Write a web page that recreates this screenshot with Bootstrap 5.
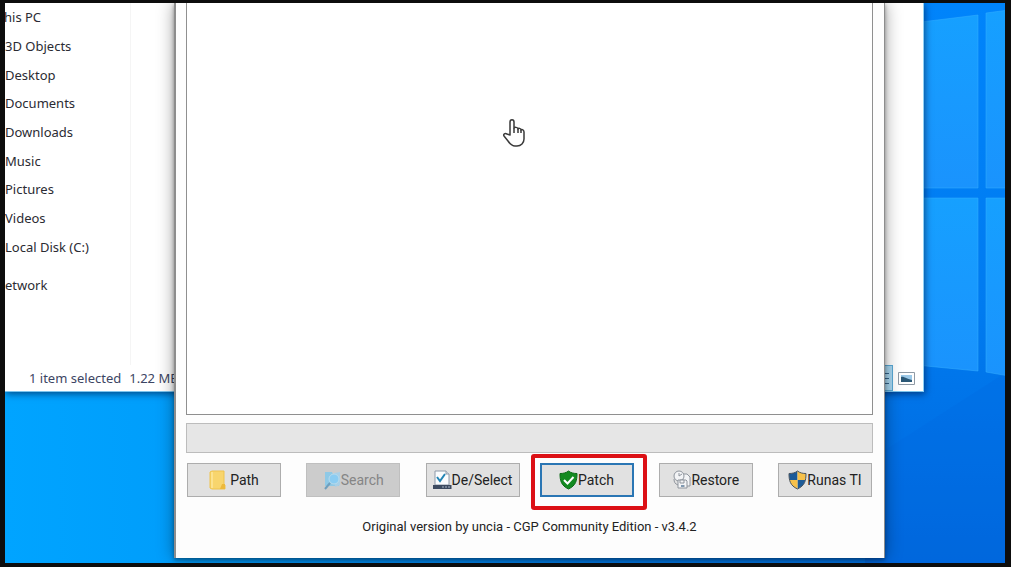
<!DOCTYPE html>
<html lang="en">
<head>
<meta charset="utf-8">
<meta name="viewport" content="width=device-width, initial-scale=1">
<title>Patcher</title>
<link href="https://cdn.jsdelivr.net/npm/bootstrap@5.3.0/dist/css/bootstrap.min.css" rel="stylesheet">
<style>
  body { background: #0d0d0d; padding: 3px 6px 4px 5px; font-family: Roboto, "Liberation Sans", Arial, sans-serif; font-size: 14px; line-height: 20px; }
  .desktop { background: linear-gradient(90deg, #00a4ff 0%, #009dfb 18%, #0079e6 60%, #0070e6 100%); }
  .wallpaper { inset: 0; }
  .explorer { inset: 0 81px 171px 0; background: #fff; color: #2b2b33; font-family: "Noto Sans", "Open Sans", sans-serif; font-size: 13px; border-right: 1px solid #8fd0f5; border-bottom: 1px solid #7cc4ee; box-shadow: 1px 2px 7px rgba(0, 20, 60, .6); }
  .tree { width: 126px; border-right: 1px solid #f5f5f5; }
  .places { height: 258px; }
  .tree a { color: inherit; }
  .places li.cut { margin-left: -1px; }
  .network { margin-top: 14px; }
  .statusbar { height: 26px; color: #3c4563; padding-left: 24px; }
  .view-btn { width: 26px; height: 26px; }
  .view-btn.chosen { background: #a9d8f2; border: 1px solid #5aa9d6 !important; }
  .patcher { inset: 0 120px 5px 169px; background: #fdfdfd; border: solid #8d8d8d; border-width: 0 1px 0 2px; box-shadow: 0 0 16px rgba(0, 0, 0, .38), 0 2px 4px rgba(0, 0, 0, .35); padding: 0 11px 21px 10px; }
  .results { background: #fff; border: 1px solid #8f8f8f; border-top: 0; }
  .meter { height: 30px; margin-top: 8px; background: #e6e6e6; border: 1px solid #bcbcbc; border-radius: 0; }
  .actions { margin-top: 10px; gap: 20px; padding: 0 1px; }
  .tool { width: 94px; height: 34px; padding: 0; background: #e1e1e1; border: 1px solid #adadad; border-radius: 0; color: #222; font-size: 14px; line-height: 20px; }
  .tool:hover { background: #e5f1fb; border-color: #0078d7; }
  .tool:disabled { background: #cccccc; border-color: #bfbfbf; color: #858585; opacity: 1; }
  .tool.focused { border: 2px solid #2a76b4; }
  .callout { inset: -9px -13px -13px -9px; border: 4px solid #dc1015; border-radius: 3px; pointer-events: none; }
  .credit { margin-top: 20px; font-size: 13px; color: #222; }
  .pointer { left: 497px; top: 115px; }
</style>
</head>
<body class="vh-100 overflow-hidden">
<main class="desktop position-relative h-100 overflow-hidden">
  <svg class="wallpaper position-absolute w-100 h-100" viewBox="0 0 1000 560" preserveAspectRatio="xMaxYMin slice" aria-hidden="true">
    <defs>
      <linearGradient id="sky" x1="0" y1="0" x2="0" y2="1"><stop offset="0" stop-color="#0084fb"/><stop offset=".55" stop-color="#007bf0"/><stop offset="1" stop-color="#0067dc"/></linearGradient>
      <linearGradient id="pane" x1="0" y1="0" x2="0" y2="1"><stop offset="0" stop-color="#16a0ff"/><stop offset="1" stop-color="#1a93fd"/></linearGradient>
    </defs>
    <rect x="860" width="140" height="560" fill="url(#sky)"/>
    <path d="M860 460 1000 370V560H860z" fill="#0066e0" opacity=".25"/>
    <g fill="url(#pane)" stroke="#35b0ff" stroke-opacity=".5">
      <path d="M900 21 973 12V185H900z"/><path d="M981 10 1004 7V185H981z"/>
      <path d="M900 195H973V368L900 361z"/><path d="M981 195H1004V373L981 369z"/>
    </g>
  </svg>

  <section class="explorer position-absolute d-flex flex-column" aria-label="File Explorer">
    <nav class="tree flex-grow-1 overflow-hidden">
      <ul class="places list-unstyled d-flex flex-column justify-content-around mb-0 text-nowrap">
        <li class="cut"><a class="text-decoration-none" href="#">his PC</a></li>
        <li><a class="text-decoration-none" href="#">3D Objects</a></li>
        <li><a class="text-decoration-none" href="#">Desktop</a></li>
        <li><a class="text-decoration-none" href="#">Documents</a></li>
        <li><a class="text-decoration-none" href="#">Downloads</a></li>
        <li><a class="text-decoration-none" href="#">Music</a></li>
        <li><a class="text-decoration-none" href="#">Pictures</a></li>
        <li><a class="text-decoration-none" href="#">Videos</a></li>
        <li><a class="text-decoration-none" href="#">Local Disk (C:)</a></li>
      </ul>
      <a class="network d-block text-decoration-none" href="#">etwork</a>
    </nav>
    <footer class="statusbar d-flex align-items-center text-nowrap">
      <span>1 item selected</span><span class="ms-2">1.22 MB</span>
      <button class="view-btn chosen btn p-0 rounded-0 ms-auto d-flex align-items-center justify-content-end" aria-label="Details view">
        <svg width="16" height="16" viewBox="0 0 16 16" stroke="#35648c" aria-hidden="true"><path d="M2 3.500H13M2 8.500H13M2 13.500H13"/></svg>
      </button>
      <button class="view-btn btn border-0 p-0 rounded-0 me-1 d-flex align-items-center justify-content-center" aria-label="Large icons view">
        <svg width="17" height="13" viewBox="0 0 17 13" aria-hidden="true"><path d="M.5.5h16v12H.5z" fill="#fff" stroke="#8f9aa5"/><path d="M3 3h11v7H3z" fill="#9cc9e8"/><path d="M3 5c3-1 5 2 11 3v2H3z" fill="#2b5876"/></svg>
      </button>
    </footer>
  </section>

  <section class="patcher position-absolute d-flex flex-column" aria-label="Patcher">
    <div class="results flex-grow-1"></div>
    <div class="meter progress" role="progressbar" aria-label="Progress" aria-valuenow="0" aria-valuemin="0" aria-valuemax="100"></div>
    <div class="actions d-flex">
      <div class="d-flex flex-fill justify-content-between">
        <button class="tool btn d-flex align-items-center justify-content-center">
          <svg width="17" height="20" viewBox="0 0 17 20" class="me-1" aria-hidden="true"><path d="M1 2 3 1H15V14l1 1v4H3L1 18z" fill="#f8d56d" stroke="#efc34e"/><path d="M3 2v16" stroke="#fff0b3"/><path d="M13 14h3v5h-5z" fill="#edb93b"/></svg>Path
        </button>
        <button class="tool btn d-flex align-items-center justify-content-center" disabled>
          <svg width="18" height="20" viewBox="0 0 18 20" aria-hidden="true"><path d="M2 2h7l1 2h6v12H2z" fill="#8fc9e6"/><path d="M11 3 17 2v13l-5 2z" fill="#a9cfe6"/><circle cx="11" cy="9" r="5" fill="#8accf2" stroke="#b9dbec"/><path d="m7 13-5 6" stroke="#6f9fbd" stroke-width="2"/></svg>Search
        </button>
        <button class="tool btn d-flex align-items-center justify-content-center">
          <svg width="19" height="20" viewBox="0 0 19 20" aria-hidden="true"><path d="M2 1h11l3 3v11H2z" fill="#fafcfe" stroke="#8e99a8"/><path d="M13 1v3h3" fill="#d7dee7" stroke="#8e99a8"/><path d="m4 7 3 4 5-7" fill="none" stroke="#2284b5" stroke-width="2"/><path d="M0 15h18.500v4H0z" fill="#3c4a60"/><path d="M9 17h2m1 0h2m1 0h2" stroke="#a6b3c5"/></svg>De/Select
        </button>
      </div>
      <div class="d-flex flex-fill justify-content-between">
        <div class="position-relative">
          <button class="tool focused btn d-flex align-items-center justify-content-center">
            <svg width="19" height="20" viewBox="0 0 19 20" aria-hidden="true"><path d="M9.500 1C12 3 15 3.500 18 3.500c0 7-1 12-8.500 15.500C2 15.500 1 10.500 1 3.500 4 3.500 7 3 9.500 1z" fill="#138a20" stroke="#0c6b17"/><path d="m5 10 3.500 3.500L14.500 7" fill="none" stroke="#fff" stroke-width="2"/></svg>Patch
          </button>
          <div class="callout position-absolute"></div>
        </div>
        <button class="tool btn d-flex align-items-center justify-content-center">
          <svg width="19" height="20" viewBox="0 0 19 20" fill="#f3f4f6" stroke="#8f959d" aria-hidden="true"><path d="M10 4h5l3 3v9h-8z"/><circle cx="7" cy="6" r="5"/><path d="M7 3v3l3-2" fill="none"/><path d="M2 9c0 3 1 5 4 6" fill="none"/><path d="M6 10h8l1 1v7H6z"/><path d="M8 10h4v3H8zM9 16h4"/><path d="M9 16h3" stroke="#3e6f99"/></svg>Restore
        </button>
        <button class="tool btn d-flex align-items-center justify-content-center">
          <svg width="19" height="20" viewBox="0 0 19 20" aria-hidden="true"><clipPath id="uac"><path d="M9.500 1C12 3 15 3.500 18 3.500c0 7-1 12-8.500 15.500C2 15.500 1 10.500 1 3.500 4 3.500 7 3 9.500 1z"/></clipPath><g clip-path="url(#uac)"><path d="M0 0h9.500v10H0zM9.500 10H19v10H9.500z" fill="#1d5b98"/><path d="M9.500 0H19v10H9.500zM0 10h9.500v10H0z" fill="#f6c14b"/></g><path d="M9.500 1C12 3 15 3.500 18 3.500c0 7-1 12-8.500 15.500C2 15.500 1 10.500 1 3.500 4 3.500 7 3 9.500 1z" fill="none" stroke="#4b5661"/></svg>Runas TI
        </button>
      </div>
    </div>
    <p class="credit text-center mb-0">Original version by uncia - CGP Community Edition - v3.4.2</p>
  </section>

  <svg class="pointer position-absolute" width="24" height="30" viewBox="0 0 24 30" aria-hidden="true">
    <path d="M8 17V4c0-3 4-3 4 0v6c0-1 4-1 4 1 0-1 3-1 3 1 1-1 3 0 3 2v7c0 4-3 7-7 7h-2c-3 0-5-2-7-5l-4-5c-1-2 1-3 3-2z" fill="#fff" stroke="#3a3a3a" stroke-width="1.500" stroke-linejoin="round"/>
    <path d="M12 10v5M16 11v4M19 12v3" stroke="#3a3a3a" stroke-width="1.500"/>
  </svg>
</main>
<script src="https://cdn.jsdelivr.net/npm/bootstrap@5.3.0/dist/js/bootstrap.bundle.min.js"></script>
</body>
</html>
